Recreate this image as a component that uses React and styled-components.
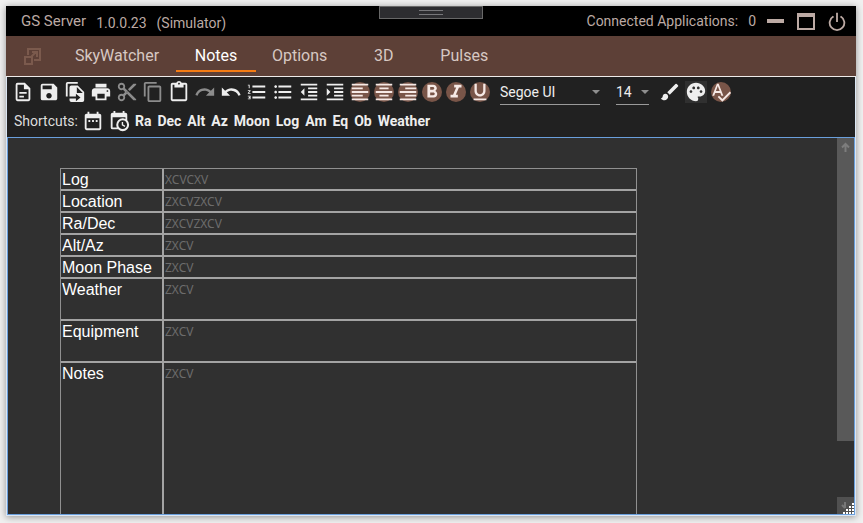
import React from 'react';
import styled, { createGlobalStyle, css } from 'styled-components';
import {
  MdBrush, MdContentCopy, MdContentCut, MdContentPaste, MdDateRange,
  MdFormatAlignCenter, MdFormatAlignLeft, MdFormatAlignRight, MdFormatBold,
  MdFormatIndentDecrease, MdFormatIndentIncrease, MdFormatItalic,
  MdFormatListBulleted, MdFormatListNumbered, MdFormatUnderlined, MdPalette,
  MdPrint, MdRedo, MdSave, MdSpellcheck, MdUndo,
} from 'react-icons/md';

const GlobalStyle = createGlobalStyle`
  * { box-sizing: border-box; }
  body { margin: 0; background: #f0f0f0; font-family: Roboto, sans-serif; }
  button, select { font: inherit; color: inherit; background: none; border: 0; padding: 0; margin: 0; }
`;

const Page = styled.div`
  height: 100vh;
  padding: 6px 7px 7px 6px;
  display: flex;
`;

const Window = styled.div`
  flex: 1;
  min-width: 0;
  display: flex;
  flex-direction: column;
  position: relative;
  background: #dbe6f3;
  box-shadow: 0 1px 7px rgba(0, 0, 0, 0.4);
`;

const TitleBar = styled.header`
  height: 30px;
  flex: none;
  display: flex;
  align-items: center;
  padding: 0 10px 0 15px;
  background: #000;
  color: #bcaaa4;
  font-size: 14px;
  white-space: nowrap;
`;

const AppName = styled.span`
  font-size: 15px;
  margin-right: 10px;
`;

const Version = styled.span`
  margin: 3px 10px 0 0;
`;

const TitleRight = styled.div`
  margin-left: auto;
  display: flex;
  align-items: center;
  gap: 10px;
`;

const WindowButton = styled.button`
  width: 20px;
  height: 20px;
  display: grid;
  place-items: center;
  svg { display: block; }
`;

const WindowButtons = styled.div`
  display: flex;
  gap: 10px;
`;

const DragHandle = styled.div`
  position: absolute;
  top: 0;
  left: 50%;
  transform: translateX(-50%);
  width: 104px;
  height: 13px;
  border: 1px solid #686868;
  background: #2d2d30;
  display: grid;
  place-items: center;
  &::before {
    content: '';
    width: 24px;
    height: 3px;
    border: solid #77777a;
    border-width: 1px 0;
  }
`;

const TabBar = styled.nav`
  height: 41px;
  flex: none;
  display: flex;
  background: #5d4037;
  border-bottom: 1px solid #efebe9;
`;

const PopOut = styled.button`
  width: 52px;
  display: grid;
  place-items: center;
  color: #7b5a4d;
`;

const Tab = styled.button`
  height: 36px;
  padding: 4px 16px 0;
  font-size: 16px;
  min-width: ${(p) => p.$width}px;
  text-align: center;
  color: ${(p) => (p.$active ? '#fff' : '#d7c8c3')};
  border-bottom: 2px solid ${(p) => (p.$active ? '#f57c14' : 'transparent')};
`;

const Toolbar = styled.div`
  flex: none;
  margin: 0 1px;
  padding: 1px 5px 0;
  height: 60px;
  background: #212121;
  color: #eee;
`;

const ToolRow = styled.div`
  display: flex;
  align-items: center;
  height: ${(p) => p.$height}px;
`;

const Group = styled.div`
  display: flex;
  align-items: center;
  gap: ${(p) => p.$gap}px;
  margin-right: ${(p) => p.$after || 0}px;
`;

const ToolButton = styled.button`
  width: 22px;
  height: 22px;
  display: flex;
  align-items: center;
  justify-content: center;
  color: ${(p) => (p.$dim ? '#8c8c8c' : '#eee')};
  svg { display: block; flex: none; width: 22px; height: 22px; }
  ${(p) => p.$round && css`
    width: 20px;
    height: 20px;
    border-radius: 50%;
    background: #795548;
    color: #f6e9e5;
  `}
  ${(p) => p.$lit && css`
    background: #303030;
  `}
`;

const SelectBox = styled.div`
  position: relative;
  width: ${(p) => p.$width}px;
  height: 26px;
  margin-right: ${(p) => p.$after}px;
  border-bottom: 1px solid #9a9a9a;
  &::after {
    content: '';
    position: absolute;
    right: 0;
    top: 11px;
    border: 4px solid transparent;
    border-top-color: #8f8f8f;
  }
`;

const Select = styled.select`
  appearance: none;
  width: 100%;
  height: 25px;
  font-size: 14px;
  option { color: #000; }
`;

const ShortcutLabel = styled.span`
  font-size: 14px;
  color: #ddd;
  margin: 0 4px 0 2px;
`;

const Shortcut = styled.button`
  font-size: 14px;
  font-weight: 700;
  color: #eee;
`;

const Editor = styled.main`
  flex: 1;
  min-height: 0;
  margin: 0 1px 1px;
  display: flex;
  background: #303030;
  border: 1px solid #6a9fdc;
  overflow: hidden;
`;

const Document = styled.div`
  flex: 1;
  min-width: 0;
  overflow: hidden;
  padding: 30px 0 0 52px;
`;

const NotesTable = styled.table`
  width: 577px;
  max-width: 100%;
  table-layout: fixed;
  border-spacing: 0;
  border: 1px solid #909090;
  border-collapse: separate;
  font-size: 16px;
  line-height: 18px;
`;

const Row = styled.tr`
  height: ${(p) => p.$height}px;
`;

const Label = styled.th`
  width: 102px;
  padding: 2px 0 0 1px;
  border: solid #a3a3a3;
  border-width: 0 1px 2px 0;
  color: #fff;
  font-family: 'Liberation Sans', Arial, sans-serif;
  font-weight: 400;
  text-align: left;
  vertical-align: top;
  white-space: nowrap;
`;

const Value = styled.td`
  padding: 2px 0 0 1px;
  border: solid #a3a3a3;
  border-width: 0 0 2px 1px;
  color: #6c6c6c;
  font-family: 'Noto Sans', 'Open Sans', sans-serif;
  font-size: 12px;
  vertical-align: top;
`;

const ScrollTrack = styled.div`
  flex: none;
  width: 17px;
  display: flex;
  flex-direction: column;
  justify-content: space-between;
  background: #303030;
`;

const ScrollThumb = styled.div`
  flex: 0 0 80.5%;
  background: #595959;
  padding: 4px 3px;
  color: #7d7d7d;
  svg { display: block; }
`;

const Grip = styled.div`
  height: 17px;
  background: #505050;
  svg { display: block; }
`;

function Glyph({ d, size = 20 }) {
  return (
    <svg width={size} height={size} viewBox="0 0 24 24" fill="currentColor" fillRule="evenodd" aria-hidden="true">
      <path d={d} />
    </svg>
  );
}

const FILE = 'M6 2A2 2 0 0 0 4 4V20A2 2 0 0 0 6 22H18A2 2 0 0 0 20 20V8L14 2H6M6 4H13V9H18V20H6V4M8 12V14H16V12H8M8 16V18H13V16H8Z';
const FILE_MOVE = 'M4 1H15V3H4V17H2V3A2 2 0 0 1 4 1M8 5H15L22 12V21A2 2 0 0 1 20 23H8A2 2 0 0 1 6 21V19H13V22L18 18L13 14V17H6V7A2 2 0 0 1 8 5M14 6.5V13H20.5Z';
const CALENDAR_CLOCK = 'M15 13H16.5V15.8L18.9 17.2L18.2 18.5L15 16.7V13M19 8H5V19H9.7C9.3 18.1 9 17.1 9 16A7 7 0 0 1 16 9C17.1 9 18.1 9.3 19 9.7V8M5 21A2 2 0 0 1 3 19V5A2 2 0 0 1 5 3H6V1H8V3H16V1H18V3H19A2 2 0 0 1 21 5V11.1A7 7 0 1 1 11.1 21H5M16 11.2A4.8 4.8 0 1 0 16 20.8A4.8 4.8 0 0 0 16 11.2Z';
const POWER = 'M11 2H13V12H11V2M16.6 5.1L15.1 6.6A7 7 0 1 1 8.9 6.6L7.4 5.1A9 9 0 1 0 16.6 5.1Z';

const tabs = [
  { name: 'SkyWatcher', width: 118 },
  { name: 'Notes', width: 80, active: true },
  { name: 'Options', width: 87 },
  { name: '3D', width: 81 },
  { name: 'Pulses', width: 78 },
];

const actions = [
  ['New', <Glyph d={FILE} />],
  ['Save', <MdSave />],
  ['Open', <Glyph d={FILE_MOVE} />],
  ['Print', <MdPrint />],
  ['Cut', <MdContentCut />, true],
  ['Copy', <MdContentCopy />, true],
  ['Paste', <MdContentPaste />],
  ['Redo', <MdRedo />, true],
  ['Undo', <MdUndo />],
  ['Numbered list', <MdFormatListNumbered />],
  ['Bulleted list', <MdFormatListBulleted />],
  ['Decrease indent', <MdFormatIndentDecrease />],
  ['Increase indent', <MdFormatIndentIncrease />],
];

const formats = [
  ['Align left', <MdFormatAlignLeft />],
  ['Align center', <MdFormatAlignCenter />],
  ['Align right', <MdFormatAlignRight />],
  ['Bold', <MdFormatBold />],
  ['Italic', <MdFormatItalic />],
  ['Underline', <MdFormatUnderlined />],
];

const shortcuts = ['Ra', 'Dec', 'Alt', 'Az', 'Moon', 'Log', 'Am', 'Eq', 'Ob', 'Weather'];

const rows = [
  ['Log', 'XCVCXV', 22],
  ['Location', 'ZXCVZXCV', 22],
  ['Ra/Dec', 'ZXCVZXCV', 22],
  ['Alt/Az', 'ZXCV', 22],
  ['Moon Phase', 'ZXCV', 22],
  ['Weather', 'ZXCV', 42],
  ['Equipment', 'ZXCV', 42],
  ['Notes', 'ZXCV', 220],
];

const gripDots = [[12, 3], [9, 6], [12, 6], [6, 9], [9, 9], [12, 9], [3, 12], [6, 12], [9, 12], [12, 12]];

export default function App() {
  return (
    <Page>
      <GlobalStyle />
      <Window>
        <TitleBar>
          <AppName>GS Server</AppName>
          <Version>1.0.0.23</Version>
          <Version>(Simulator)</Version>
          <TitleRight>
            <span>Connected Applications:</span>
            <span>0</span>
            <WindowButtons>
              <WindowButton aria-label="Minimize">
                <svg width="20" height="20" fill="currentColor"><path d="M1 8H18V12H1Z" /></svg>
              </WindowButton>
              <WindowButton aria-label="Maximize">
                <svg width="20" height="20" fill="currentColor" fillRule="evenodd"><path d="M1 2H19V19H1ZM3 6V17H17V6Z" /></svg>
              </WindowButton>
              <WindowButton aria-label="Close"><Glyph d={POWER} size={22} /></WindowButton>
            </WindowButtons>
          </TitleRight>
        </TitleBar>
        <DragHandle />
        <TabBar>
          <PopOut aria-label="Open in window">
            <svg width="17" height="17" fill="none" stroke="currentColor" strokeWidth="2" aria-hidden="true">
              <path d="M4 7V1H16V12H10M1 9H8V16H1ZM7 9L12 4M8 4H13V9" />
            </svg>
          </PopOut>
          {tabs.map((t) => (
            <Tab key={t.name} $width={t.width} $active={t.active}>{t.name}</Tab>
          ))}
        </TabBar>
        <Toolbar>
          <ToolRow $height={28}>
            <Group $gap={4} $after={4}>
              {actions.map(([name, icon, dim]) => (
                <ToolButton key={name} aria-label={name} $dim={dim}>{icon}</ToolButton>
              ))}
            </Group>
            <Group $gap={4} $after={10}>
              {formats.map(([name, icon]) => (
                <ToolButton key={name} aria-label={name} $round>{icon}</ToolButton>
              ))}
            </Group>
            <SelectBox $width={100} $after={16}>
              <Select aria-label="Font"><option>Segoe UI</option></Select>
            </SelectBox>
            <SelectBox $width={33} $after={10}>
              <Select aria-label="Font size"><option>14</option></Select>
            </SelectBox>
            <Group $gap={4}>
              <ToolButton aria-label="Brush"><MdBrush /></ToolButton>
              <ToolButton aria-label="Colours" $lit><MdPalette /></ToolButton>
              <ToolButton aria-label="Spelling" $round><MdSpellcheck /></ToolButton>
            </Group>
          </ToolRow>
          <ToolRow $height={30}>
            <ShortcutLabel>Shortcuts:</ShortcutLabel>
            <Group $gap={4} $after={5}>
              <ToolButton aria-label="Insert date"><MdDateRange /></ToolButton>
              <ToolButton aria-label="Insert date and time"><Glyph d={CALENDAR_CLOCK} /></ToolButton>
            </Group>
            <Group $gap={6}>
              {shortcuts.map((s) => <Shortcut key={s}>{s}</Shortcut>)}
            </Group>
          </ToolRow>
        </Toolbar>
        <Editor>
          <Document>
            <NotesTable>
              <tbody>
                {rows.map(([label, value, height]) => (
                  <Row key={label} $height={height}>
                    <Label scope="row">{label}</Label>
                    <Value>{value}</Value>
                  </Row>
                ))}
              </tbody>
            </NotesTable>
          </Document>
          <ScrollTrack>
            <ScrollThumb>
              <svg width="11" height="11" fill="none" stroke="currentColor" strokeWidth="2"><path d="M5.5 10V2M2 5.5L5.5 2L9 5.5" /></svg>
            </ScrollThumb>
            <Grip>
              <svg width="17" height="17" fill="#fff">
                <path d="M8 5V11M5 8L8 11" fill="none" stroke="#777" strokeWidth="2" />
                {gripDots.map(([x, y]) => <rect key={`${x}-${y}`} x={x + 3} y={y + 3} width="2" height="2" />)}
              </svg>
            </Grip>
          </ScrollTrack>
        </Editor>
      </Window>
    </Page>
  );
}
